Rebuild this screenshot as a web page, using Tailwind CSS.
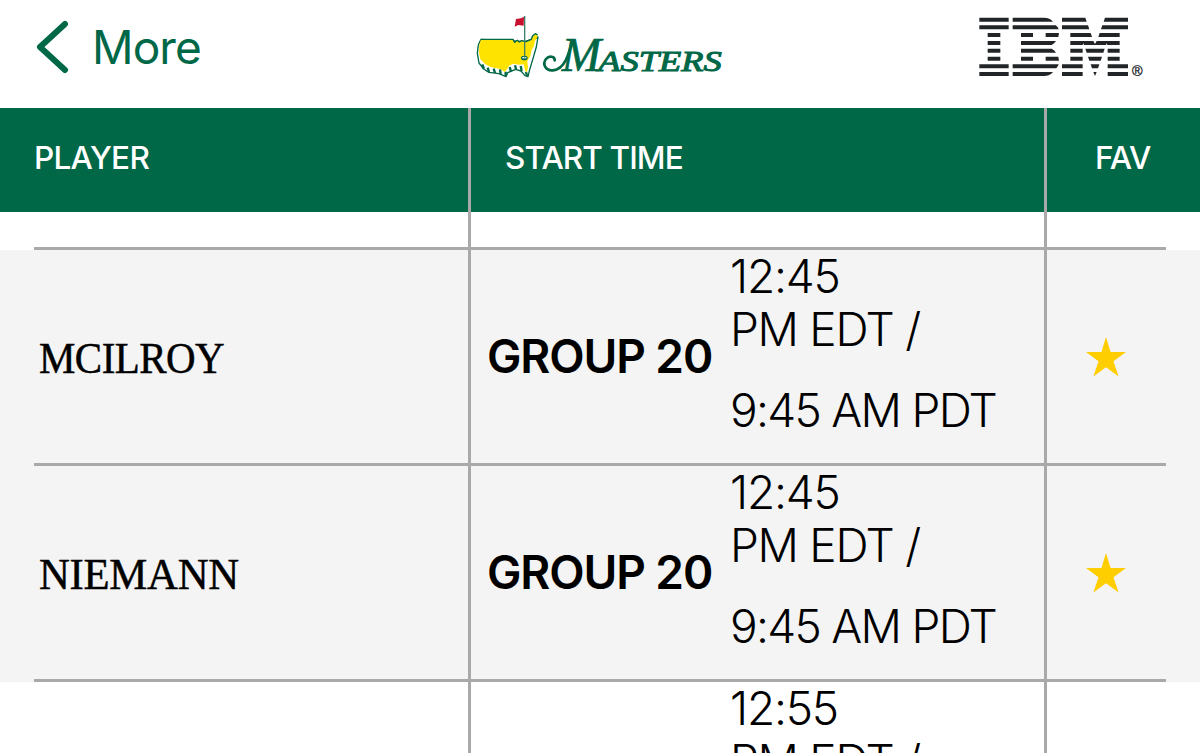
<!DOCTYPE html>
<html lang="en">

<head>
    <meta charset="UTF-8">
    <meta name="viewport" content="width=device-width, initial-scale=1.0">
    <title>Masters - Starting Times</title>
    <script src="https://cdn.jsdelivr.net/npm/@tailwindcss/browser@4"></script>
</head>

<body class="bg-white text-black">
    <main class="flex flex-col h-screen w-screen overflow-hidden font-['Inter',sans-serif]">
        <header class="flex-none h-[108px] flex flex-row items-start">
            <button class="flex-none w-[465px] h-[94px] pl-[35px] flex flex-row items-center text-[#006747]">
                <svg class="flex-none w-[34px] h-[56px]" viewBox="0 0 34 56" fill="none" stroke="currentColor"
                    stroke-width="6" stroke-linecap="round" stroke-linejoin="round">
                    <path d="M30 5 5 28 30 51" />
                </svg>
                <span class="ml-[23px] text-[46px] leading-none tracking-[-0.9px]">More</span>
            </button>
            <svg class="flex-none w-[270px] h-[85px] mt-[5px]" viewBox="0 0 810 255">
                <!-- map -->
                <path d="M48 103 40 120 37 145 42 174 56 192 72 202 102 206 123 215 128 203 152 193 168 198 180 212 189 215 194 194 203 164 214 126 219 96 180 110Z"
                    fill="#fff" stroke="#006747" stroke-width="4" stroke-linejoin="round" />
                <path d="M52 178 57 191 M68 188 72 201 M86 191 90 204 M105 193 107 207 M122 200 122 213 M134 186 138 200 M150 181 153 193 M167 183 170 198 M183 200 186 213"
                    stroke="#006747" stroke-width="7" fill="none" />
                <path d="M48 103 144 103 149 112 157 106 163 111 170 107 183 110 199 103 203 92 211 86 218 90 216 99 210 108 207 123 200 135 196 154 187 168 189 188 185 203 180 196 176 178 163 179 145 176 132 182 125 194 119 201 105 191 88 189 76 186 60 177 46 163 42 145 43 120Z"
                    fill="#ffe300" />
                <path d="M48 103 144 103 149 112 157 106 163 111 170 107 183 110 199 103 203 92 211 86 218 90"
                    fill="none" stroke="#006747" stroke-width="4" stroke-linejoin="round" />
                <!-- pin and flag -->
                <ellipse cx="178" cy="159" rx="10" ry="7" fill="#006747" />
                <path d="M172 158h12" stroke="#fff" stroke-width="4" />
                <path d="M179 33V158" stroke="#3d8068" stroke-width="4" />
                <path d="M177 35 168 40 153 42 149 65 160 60 176 62Z" fill="#c8102e" />
                <!-- wordmark -->
                <g fill="#006747" font-family="Liberation Serif, serif" font-style="italic" stroke="#006747">
                    <text x="290" y="199" font-size="146" stroke-width="2" textLength="118"
                        lengthAdjust="spacingAndGlyphs">M</text>
                    <text x="400" y="199" font-size="88" stroke-width="3" textLength="370"
                        lengthAdjust="spacingAndGlyphs">ASTERS</text>
                </g>
                <path d="M322 108C312 145 300 193 264 196C240 198 232 176 243 162C252 151 270 154 269 166" fill="none"
                    stroke="#006747" stroke-width="8" stroke-linecap="round" />
            </svg>
            <svg class="flex-none w-[200px] h-[85px] mt-[5px] ml-[225px]" viewBox="0 0 600 255" fill="#222527">
                <path d="M58 38h88v12H58zM58 61h88v12H58zM83 84h38v12H83zM83 108h38v12H83zM83 131h38v12H83zM83 155h38v12H83zM58 178h88v12H58zM58 201h88v12H58z" />
                <path d="M158 38h94q18 0 27 12H158zM158 61h129q7 5 9 12H158zM183 84h36v12h-36zM257 84h40l-2 12h-38zM183 108h105q-4 7-13 12h-92zM183 131h92q9 4 13 12H183zM183 155h36v12h-36zM257 155h38l2 12h-40zM158 178h138q-2 7-7 12H158zM158 201h121q-9 12-27 12h-94z" />
                <path d="M306 38h70l4 12h-74zM306 61h78l4 12h-82zM331 84h61l4 12h-65zM331 108h69l5 9 5-9h69v12h-37l-2-5-2 5h-66l-2-5-2 5h-37zM331 131h37v12h-37zM376 131h58l-4 12h-50zM443 131h36v12h-36zM331 155h37v12h-37zM384 155h42l-4 12h-34zM443 155h36v12h-36zM306 178h62v12h-62zM392 178h26l-4 12h-18zM443 178h61v12h-61zM306 201h62v12h-62zM400 201h10l-5 12zM443 201h61v12h-61z" />
                <path d="M435 38h69v12h-73zM427 61h77v12h-81zM419 84h60v12h-64z" />
                <text x="516" y="214" font-size="43" font-family="Liberation Sans, sans-serif" stroke="#222527">®</text>
            </svg>
        </header>

        <section
            class="flex-none h-[104px] flex flex-row bg-[#006747] text-white font-medium text-[31.5px] leading-[100px]">
            <div class="w-[471px] pl-[34px] border-r-3 border-[#a9a9a9] tracking-[-0.7px]">PLAYER</div>
            <div class="w-[576px] pl-[34px] border-r-3 border-[#a9a9a9] tracking-[-0.9px]">START TIME</div>
            <div class="flex-1 pl-[48px] tracking-[-0.9px]">FAV</div>
        </section>

        <section class="flex-none h-[38px] px-[34px]">
            <div class="h-full flex flex-row border-b-3 border-[#a9a9a9]">
                <div class="w-[437px] border-r-3 border-[#a9a9a9]"></div>
                <div class="w-[576px] border-r-3 border-[#a9a9a9]"></div>
            </div>
        </section>

        <section class="flex-none h-[216px] px-[34px] bg-[#f4f4f4]">
            <div class="h-full flex flex-row border-b-3 border-[#a9a9a9]">
                <div class="w-[437px] pl-[5px] pt-[4px] flex items-center border-r-3 border-[#a9a9a9] font-['Liberation_Serif',serif] text-[45px]">
                    <span class="inline-block origin-left scale-x-[0.91] tracking-[-0.6px] [-webkit-text-stroke:0.5px_black]">MCILROY</span>
                </div>
                <div class="w-[576px] pl-[16px] flex flex-row border-r-3 border-[#a9a9a9] text-[46px] whitespace-nowrap">
                    <div class="w-[243px] flex items-center font-semibold tracking-[-1.1px]">GROUP 20</div>
                    <div class="flex flex-col font-light leading-[53px] tracking-[-1.7px]">
                        <div class="tracking-[-1.2px]">12:45</div>
                        <div class="tracking-[-1.3px]">PM EDT /</div>
                        <div class="mt-[28px]">9:45 AM PDT</div>
                    </div>
                </div>
                <div class="flex-1 pr-[2px] flex justify-center items-center">
                    <svg class="w-[40px] h-[40px]" viewBox="0 0 40 40" fill="#ffce00">
                        <path d="M20 0 24.6 15.1H40L27.5 24.3 32.6 39.5 20 30.2 7.4 39.5 12.5 24.3 0 15.1H15.4Z" />
                    </svg>
                </div>
            </div>
        </section>

        <section class="flex-none h-[216px] px-[34px] bg-[#f4f4f4]">
            <div class="h-full flex flex-row border-b-3 border-[#a9a9a9]">
                <div class="w-[437px] pl-[5px] pt-[4px] flex items-center border-r-3 border-[#a9a9a9] font-['Liberation_Serif',serif] text-[45px]">
                    <span class="inline-block origin-left scale-x-[0.95] tracking-[-0.3px] [-webkit-text-stroke:0.5px_black]">NIEMANN</span>
                </div>
                <div class="w-[576px] pl-[16px] flex flex-row border-r-3 border-[#a9a9a9] text-[46px] whitespace-nowrap">
                    <div class="w-[243px] flex items-center font-semibold tracking-[-1.1px]">GROUP 20</div>
                    <div class="flex flex-col font-light leading-[53px] tracking-[-1.7px]">
                        <div class="tracking-[-1.2px]">12:45</div>
                        <div class="tracking-[-1.3px]">PM EDT /</div>
                        <div class="mt-[28px]">9:45 AM PDT</div>
                    </div>
                </div>
                <div class="flex-1 pr-[2px] flex justify-center items-center">
                    <svg class="w-[40px] h-[40px]" viewBox="0 0 40 40" fill="#ffce00">
                        <path d="M20 0 24.6 15.1H40L27.5 24.3 32.6 39.5 20 30.2 7.4 39.5 12.5 24.3 0 15.1H15.4Z" />
                    </svg>
                </div>
            </div>
        </section>

        <section class="flex-none h-[216px] px-[34px]">
            <div class="h-full flex flex-row border-b-3 border-[#a9a9a9]">
                <div class="w-[437px] border-r-3 border-[#a9a9a9]"></div>
                <div class="w-[576px] pl-[259px] border-r-3 border-[#a9a9a9] text-[46px] whitespace-nowrap">
                    <div class="flex flex-col font-light leading-[53px]">
                        <div class="tracking-[-1.2px]">12:55</div>
                        <div class="tracking-[-1.3px]">PM EDT /</div>
                    </div>
                </div>
            </div>
        </section>
    </main>
</body>

</html>
